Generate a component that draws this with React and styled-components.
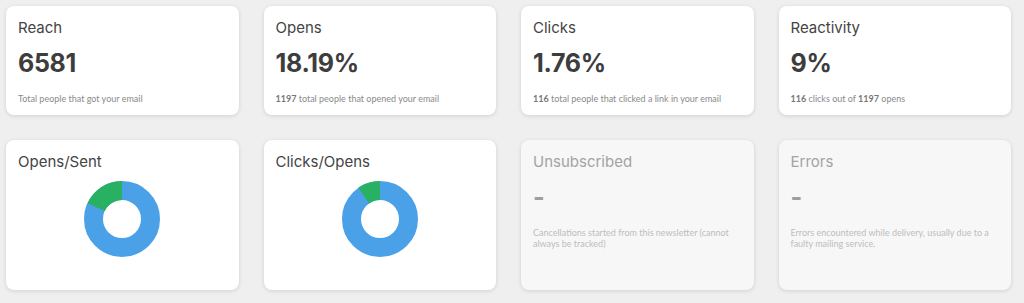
import React from "react";
import styled, { createGlobalStyle } from "styled-components";

const GlobalStyle = createGlobalStyle`
  body {
    margin: 0;
    background: #efefef;
    font-family: "Inter", "Liberation Sans", sans-serif;
  }
`;

const Board = styled.div`
  display: grid;
  grid-template-columns: repeat(4, 1fr);
  column-gap: 25px;
  row-gap: 25px;
  padding: 6px 13px 6px 6px;
`;

const Card = styled.div`
  height: ${(p) => (p.tall ? "150px" : "109px")};
  box-sizing: border-box;
  padding: 13px 12px 12px;
  border-radius: 8px;
  background: ${(p) => (p.muted ? "#f7f7f7" : "#ffffff")};
  box-shadow: 0 1px 4px rgba(0, 0, 0, 0.13);
  display: flex;
  flex-direction: column;
`;

const Title = styled.div`
  font-size: 15px;
  line-height: 18px;
  color: ${(p) => (p.muted ? "#a3a3a3" : "#444")};
`;

const Value = styled.div`
  font-size: 25px;
  font-weight: 700;
  letter-spacing: -0.3px;
  line-height: 30px;
  margin-top: 11px;
  color: ${(p) => (p.muted ? "#9e9e9e" : "#3d3d3d")};
`;

const Note = styled.div`
  font-family: "Lato", "Open Sans", sans-serif;
  font-size: 9px;
  line-height: 11px;
  margin-top: 15px;
  padding-right: 4px;
  color: ${(p) => (p.muted ? "#bdbdbd" : "#8a8a8a")};

  b {
    font-weight: 700;
    color: #777;
  }
`;

const ChartBox = styled.div`
  display: flex;
  justify-content: center;
  margin-top: 9px;
`;

function Donut({ share }) {
  const r = 28.5;
  const c = 2 * Math.PI * r;
  const green = c * share;
  return (
    <svg width="78" height="78" viewBox="0 0 78 78">
      <circle cx="39" cy="39" r={r} fill="none" stroke="#4aa1e8" strokeWidth="19" />
      <circle
        cx="39"
        cy="39"
        r={r}
        fill="none"
        stroke="#28b063"
        strokeWidth="19"
        strokeDasharray={`${green} ${c - green}`}
        transform={`rotate(${-90 - share * 360} 39 39)`}
      />
    </svg>
  );
}

function App() {
  return (
    <>
      <GlobalStyle />
      <Board>
        <Card>
          <Title>Reach</Title>
          <Value>6581</Value>
          <Note>Total people that got your email</Note>
        </Card>
        <Card>
          <Title>Opens</Title>
          <Value>18.19%</Value>
          <Note>
            <b>1197</b> total people that opened your email
          </Note>
        </Card>
        <Card>
          <Title>Clicks</Title>
          <Value>1.76%</Value>
          <Note>
            <b>116</b> total people that clicked a link in your email
          </Note>
        </Card>
        <Card>
          <Title>Reactivity</Title>
          <Value>9%</Value>
          <Note>
            <b>116</b> clicks out of <b>1197</b> opens
          </Note>
        </Card>

        <Card tall>
          <Title>Opens/Sent</Title>
          <ChartBox>
            <Donut share={0.1819} />
          </ChartBox>
        </Card>
        <Card tall>
          <Title>Clicks/Opens</Title>
          <ChartBox>
            <Donut share={0.0969} />
          </ChartBox>
        </Card>
        <Card tall muted>
          <Title muted>Unsubscribed</Title>
          <Value muted>-</Value>
          <Note muted>Cancellations started from this newsletter (cannot always be tracked)</Note>
        </Card>
        <Card tall muted>
          <Title muted>Errors</Title>
          <Value muted>-</Value>
          <Note muted>Errors encountered while delivery, usually due to a faulty mailing service.</Note>
        </Card>
      </Board>
    </>
  );
}

export default App;
